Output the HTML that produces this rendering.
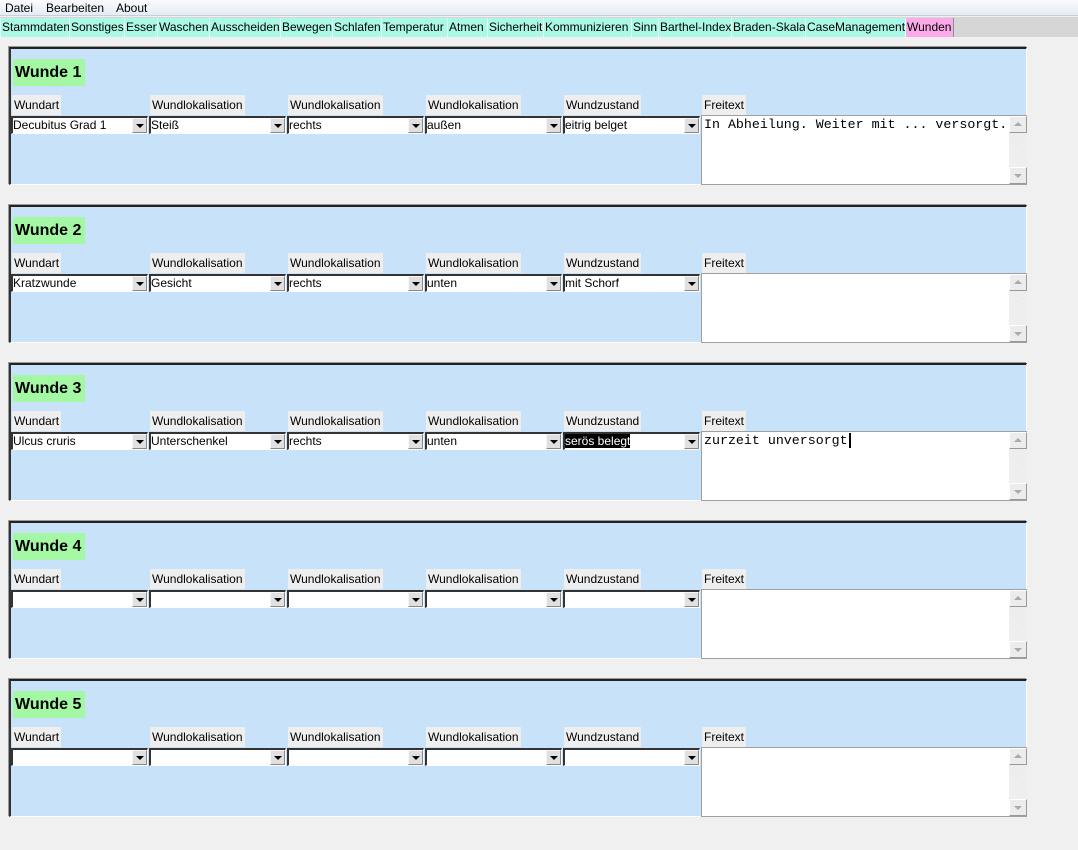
<!DOCTYPE html>
<html><head><meta charset="utf-8"><style>
*{box-sizing:border-box;margin:0;padding:0}
body{width:1078px;height:850px;background:#f0f0f0;font-family:"Liberation Sans","DejaVu Sans",sans-serif;font-size:12px;color:#000;position:relative;overflow:hidden}
.menu{position:absolute;left:0;top:0;width:1078px;height:16px;background:linear-gradient(#fafbfd,#e6ebf4);border-bottom:1px solid #c8cfdc}
.menu span{position:absolute;top:1px;font-size:12px}
.tabs{position:absolute;left:0;top:17px;width:1078px;height:20px;background:#d6d6d6}
.tab{position:absolute;top:1px;height:19px;background:#aaf8e6;border-right:1px solid #7a9a90;border-left:1px solid #e8fff8;font-size:12px;line-height:18px;padding-left:1px;white-space:nowrap;overflow:hidden}
.panel{position:absolute;left:9px;width:1018px;height:138px;background:#c8e2fa;border-top:2px solid #222;border-left:2px solid #333;border-bottom:1px solid #fff;border-right:1px solid #fff;box-shadow:-1px -1px 0 #999}
.title{position:absolute;left:2px;top:10px;height:27px;width:72px;background:#a4f8a4;font-weight:bold;font-size:16px;line-height:27px;padding-left:2px}
.lbl{position:absolute;top:46px;height:20px;background:#eeeeee;line-height:20px;padding:0 2px;font-size:12px;white-space:nowrap}
.cb{position:absolute;top:67px;height:18px;width:137px;background:#fff;border-top:2px solid #333;border-left:2px solid #333;border-bottom:1px solid #fff;border-right:1px solid #fff;font-size:12px;line-height:14px;padding-left:0;white-space:nowrap;overflow:hidden}
.cb i{position:absolute;right:0;top:0;width:15px;height:15px;background:#e0e0e0;border:1px solid #f6f6f6;border-right-color:#888;border-bottom-color:#888}
.cb i:after{content:"";position:absolute;left:3px;top:5px;border-left:4px solid transparent;border-right:4px solid transparent;border-top:4px solid #000}
.ta{position:absolute;left:690px;top:66px;width:326px;height:70px;background:#fff;border:1px solid #a0a0a0;border-right:none;font-family:"Liberation Mono",monospace;font-size:13.3px;padding:1px 0 0 2px;white-space:nowrap}
.sb{position:absolute;right:0;top:0;width:18px;height:68px;background:repeating-linear-gradient(45deg,#f4f4f4 0 1px,#e8e8e8 1px 2px)}
.sb b{position:absolute;left:0;width:18px;height:17px;background:#ececec;border:1px solid #fff;border-right-color:#999;border-bottom-color:#999}
.sb b.u{top:0}.sb b.d{bottom:0}
.sb b.u:after{content:"";position:absolute;left:4px;top:5px;border-left:4px solid transparent;border-right:4px solid transparent;border-bottom:4px solid #aaa}
.sb b.d:after{content:"";position:absolute;left:4px;top:6px;border-left:4px solid transparent;border-right:4px solid transparent;border-top:4px solid #aaa}
.sel{background:#000;color:#fff}
</style></head><body>
<div class="menu"><span style="left:5px">Datei</span><span style="left:46px">Bearbeiten</span><span style="left:116px">About</span></div>
<div class="tabs">
<div class="tab" style="left:0;width:70px">Stammdaten</div>
<div class="tab" style="left:69px;width:56px">Sonstiges</div>
<div class="tab" style="left:124px;width:34px">Essen</div>
<div class="tab" style="left:157px;width:53px">Waschen</div>
<div class="tab" style="left:209px;width:72px">Ausscheiden</div>
<div class="tab" style="left:280px;width:53px">Bewegen</div>
<div class="tab" style="left:332px;width:50px">Schlafen</div>
<div class="tab" style="left:381px;width:67px">Temperatur</div>
<div class="tab" style="left:447px;width:41px">Atmen</div>
<div class="tab" style="left:487px;width:57px">Sicherheit</div>
<div class="tab" style="left:543px;width:89px">Kommunizieren</div>
<div class="tab" style="left:631px;width:28px">Sinn</div>
<div class="tab" style="left:658px;width:74px">Barthel-Index</div>
<div class="tab" style="left:731px;width:75px">Braden-Skala</div>
<div class="tab" style="left:805px;width:101px">CaseManagement</div>
<div class="tab" style="left:905px;width:49px;background:#fcaaea">Wunden</div>
</div>

<div class="panel" style="top:47px">
<div class="title">Wunde 1</div>
<div class="lbl" style="left:1px">Wundart</div><div class="lbl" style="left:139px">Wundlokalisation</div><div class="lbl" style="left:277px">Wundlokalisation</div><div class="lbl" style="left:415px">Wundlokalisation</div><div class="lbl" style="left:553px">Wundzustand</div><div class="lbl" style="left:691px">Freitext</div>
<div class="cb" style="left:0">Decubitus Grad 1<i></i></div><div class="cb" style="left:138px">Steiß<i></i></div><div class="cb" style="left:276px">rechts<i></i></div><div class="cb" style="left:414px">außen<i></i></div><div class="cb" style="left:552px">eitrig belget<i></i></div>
<div class="ta">In Abheilung. Weiter mit ... versorgt.<div class="sb"><b class="u"></b><b class="d"></b></div></div>
</div>

<div class="panel" style="top:205px">
<div class="title">Wunde 2</div>
<div class="lbl" style="left:1px">Wundart</div><div class="lbl" style="left:139px">Wundlokalisation</div><div class="lbl" style="left:277px">Wundlokalisation</div><div class="lbl" style="left:415px">Wundlokalisation</div><div class="lbl" style="left:553px">Wundzustand</div><div class="lbl" style="left:691px">Freitext</div>
<div class="cb" style="left:0">Kratzwunde<i></i></div><div class="cb" style="left:138px">Gesicht<i></i></div><div class="cb" style="left:276px">rechts<i></i></div><div class="cb" style="left:414px">unten<i></i></div><div class="cb" style="left:552px">mit Schorf<i></i></div>
<div class="ta"><div class="sb"><b class="u"></b><b class="d"></b></div></div>
</div>

<div class="panel" style="top:363px">
<div class="title">Wunde 3</div>
<div class="lbl" style="left:1px">Wundart</div><div class="lbl" style="left:139px">Wundlokalisation</div><div class="lbl" style="left:277px">Wundlokalisation</div><div class="lbl" style="left:415px">Wundlokalisation</div><div class="lbl" style="left:553px">Wundzustand</div><div class="lbl" style="left:691px">Freitext</div>
<div class="cb" style="left:0">Ulcus cruris<i></i></div><div class="cb" style="left:138px">Unterschenkel<i></i></div><div class="cb" style="left:276px">rechts<i></i></div><div class="cb" style="left:414px">unten<i></i></div><div class="cb" style="left:552px"><span class="sel">serös belegt</span><i></i></div>
<div class="ta">zurzeit unversorgt<span style="border-left:2px solid #000;margin-left:1px"></span><div class="sb"><b class="u"></b><b class="d"></b></div></div>
</div>

<div class="panel" style="top:521px">
<div class="title">Wunde 4</div>
<div class="lbl" style="left:1px">Wundart</div><div class="lbl" style="left:139px">Wundlokalisation</div><div class="lbl" style="left:277px">Wundlokalisation</div><div class="lbl" style="left:415px">Wundlokalisation</div><div class="lbl" style="left:553px">Wundzustand</div><div class="lbl" style="left:691px">Freitext</div>
<div class="cb" style="left:0"><i></i></div><div class="cb" style="left:138px"><i></i></div><div class="cb" style="left:276px"><i></i></div><div class="cb" style="left:414px"><i></i></div><div class="cb" style="left:552px"><i></i></div>
<div class="ta"><div class="sb"><b class="u"></b><b class="d"></b></div></div>
</div>

<div class="panel" style="top:679px">
<div class="title">Wunde 5</div>
<div class="lbl" style="left:1px">Wundart</div><div class="lbl" style="left:139px">Wundlokalisation</div><div class="lbl" style="left:277px">Wundlokalisation</div><div class="lbl" style="left:415px">Wundlokalisation</div><div class="lbl" style="left:553px">Wundzustand</div><div class="lbl" style="left:691px">Freitext</div>
<div class="cb" style="left:0"><i></i></div><div class="cb" style="left:138px"><i></i></div><div class="cb" style="left:276px"><i></i></div><div class="cb" style="left:414px"><i></i></div><div class="cb" style="left:552px"><i></i></div>
<div class="ta"><div class="sb"><b class="u"></b><b class="d"></b></div></div>
</div>
</body></html>
